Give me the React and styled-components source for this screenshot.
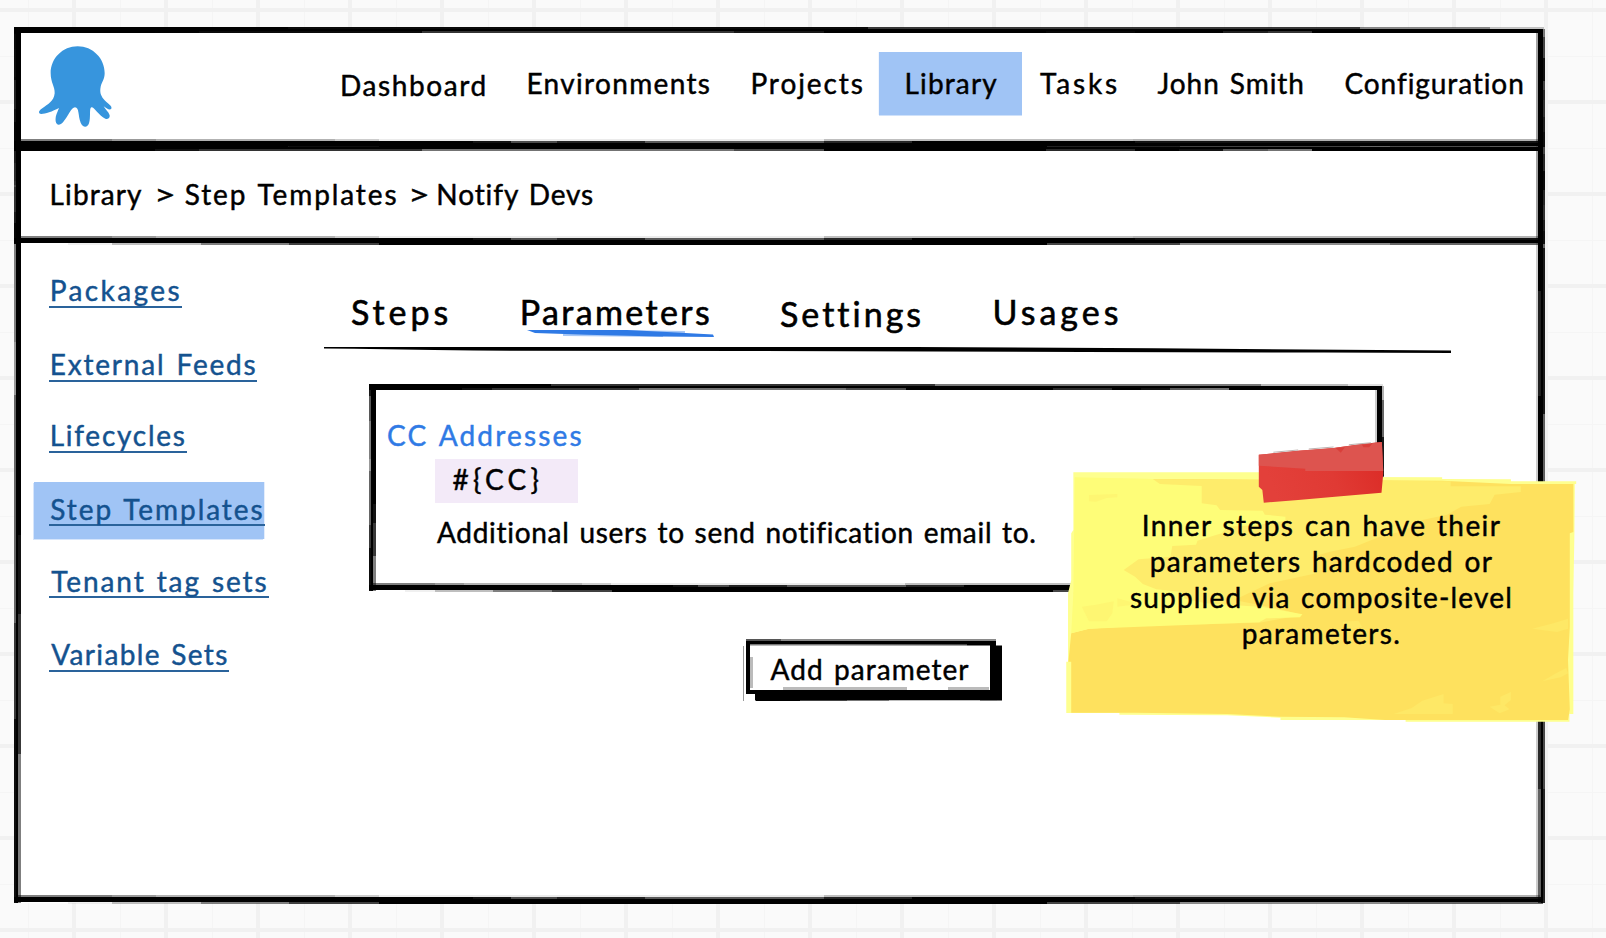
import React from 'react';
import styled, { createGlobalStyle, css } from 'styled-components';

const GlobalStyle = createGlobalStyle`
  html, body { margin: 0; padding: 0; }
  body {
    background-color: #fafafa;
    font-family: Lato, "Liberation Sans", sans-serif;
    color: #000;
    overflow: hidden;
  }
  *, *::before, *::after { box-sizing: border-box; }
`;

/* Builds a stepped gradient out of [opacity, endPercent] pairs. */
const steps = (dir, stops) => {
  let from = 0;
  const parts = stops.map(([alpha, to]) => {
    const part = `rgba(0,0,0,${alpha}) ${from}% ${to}%`;
    from = to;
    return part;
  });
  return `linear-gradient(${dir}, ${parts.join(', ')})`;
};

const TOP_OUTER = steps('to right', [[1, 17.9], [0.8, 55.8], [0.53, 88], [0.27, 96.5], [0.12, 100]]);
const TOP_INNER = steps('to right', [[1, 9.2], [0.93, 12.1], [0.8, 26.7], [0.55, 47.1], [0.7, 53], [1, 67.5], [0.84, 73.3], [1, 76.2], [0.93, 79.1], [0.65, 82], [0.55, 84.9], [1, 100]]);
const BOTTOM_LIGHT = steps('to right', [[0.5, 6.3], [0.4, 9.2], [0.3, 20.9], [0.2, 23.8], [0.08, 53], [0.25, 73.3], [0.3, 100]]);
const BOTTOM_INNER = steps('to right', [[1, 30], [0.93, 32.5], [0.7, 35.5], [0.86, 41.3], [0.65, 53], [0.85, 58.7], [1, 73.3], [0.93, 100]]);
const BOTTOM_OUTER = steps('to right', [[0, 3.4], [0.06, 6.3], [0.25, 12.1], [0.5, 17.9], [0.75, 23.8], [1, 67.5], [0.73, 76.2], [0.45, 90], [0.6, 100]]);
const LEFT_OUTER = steps('to bottom', [[0.9, 6], [0.66, 18], [0.5, 36], [0.4, 42], [0.6, 68], [0.78, 79], [0.95, 100]]);
const LEFT_INNER = steps('to bottom', [[1, 58], [0.93, 67], [0.78, 83], [0.5, 100]]);
const RIGHT_INNER = steps('to bottom', [[1, 30], [0.88, 42], [1, 73], [0.84, 87], [0.62, 100]]);
const RIGHT_OUTER = steps('to bottom', [[0.3, 7], [0.6, 25], [0.9, 44], [0.62, 60], [0.5, 75], [0.7, 87], [0.85, 100]]);
const BLACK = 'linear-gradient(#000, #000)';
const LIGHT = 'linear-gradient(rgba(0,0,0,.2), rgba(0,0,0,.2))';

const sketchEdges = css`
  background-repeat: no-repeat;
  background-image: ${TOP_OUTER}, ${BLACK}, ${TOP_INNER},
    ${BOTTOM_LIGHT}, ${BOTTOM_INNER}, ${BLACK}, ${BOTTOM_OUTER},
    ${LEFT_OUTER}, ${BLACK}, ${LEFT_INNER},
    ${LIGHT}, ${RIGHT_INNER}, ${BLACK}, ${RIGHT_OUTER}
    ${(p) => (p.$filled ? ', linear-gradient(#fff, #fff)' : '')};
  background-position:
    1px 1px, 1px 3px, 1px 5px,
    3px calc(100% - 7px), 1px calc(100% - 5px), 1px calc(100% - 2px), 3px 100%,
    1px 1px, 3px 1px, 5px 1px,
    calc(100% - 7px) 6px, calc(100% - 4px) 3px, calc(100% - 2px) 3px, 100% 3px,
    1px 2px;
  background-size:
    calc(100% - 2px) 2px, calc(100% - 3px) 2px, calc(100% - 3px) 2px,
    calc(100% - 8px) 2px, calc(100% - 3px) 2px, calc(100% - 3px) 3px, calc(100% - 5px) 2px,
    2px calc(100% - 2px), 2px calc(100% - 2px), 3px calc(100% - 2px),
    2px calc(100% - 12px), 3px calc(100% - 4px), 2px calc(100% - 4px), 2px calc(100% - 4px),
    calc(100% - 2px) calc(100% - 3px);
`;

const Page = styled.div`
  position: relative;
  width: 1606px;
  height: 938px;
  padding: 26px 0 0 13px;
  background-image:
    linear-gradient(90deg, #f1f1f1 4px, transparent 4px),
    linear-gradient(#f1f1f1 4px, transparent 4px),
    linear-gradient(90deg, #f5f5f5 1px, transparent 1px),
    linear-gradient(#f5f5f5 1px, transparent 1px);
  background-size: 92px 92px;
  background-position: 72px 0, 0 8px, 28px 0, 0 56px;
`;

const Window = styled.div`
  display: flex;
  flex-direction: column;
  width: 1532px;
  height: 878px;
  ${sketchEdges}
`;

const Header = styled.header`
  display: flex;
  align-items: flex-start;
  flex: none;
  height: 122px;
  padding: 10px 0 0 17px;
  ${sketchEdges}
`;

const Text = styled.span`
  display: block;
  font-size: ${(p) => p.$size || 28}px;
  line-height: ${(p) => (p.$size ? 44 : 36)}px;
  letter-spacing: ${(p) => p.$track}px;
  word-spacing: 2px;
  white-space: nowrap;
  font-variant-ligatures: none;
  -webkit-text-stroke: ${(p) => (p.$size ? 0.6 : 0.45)}px currentColor;
  stroke-linejoin: round;
`;

const Nav = styled.nav`
  display: grid;
  grid-template-columns: 186.4px 224px 128.6px 161px 117.5px 187px 180px;
  margin: 16px 0 0 220px;
`;

const NavItem = styled.a`
  height: 64px;
  padding-top: ${(p) => 13 + (p.$drop || 0)}px;
  ${(p) =>
    p.$active &&
    css`
      width: 143px;
      height: 63px;
      padding-left: 25.5px;
      background: #a0c4f5;
      box-shadow: 0 1px 0 #cfe1fa, -1px 0 0 #f1f6fe;
    `}
`;

const Breadcrumb = styled.div`
  display: grid;
  grid-template-columns: 104.2px 31px 223px 28.5px 1fr;
  flex: none;
  height: 101px;
  margin-top: -4px;
  padding: 32px 0 0 36.6px;
  ${sketchEdges}
`;

const Separator = styled(Text)`
  width: 20px;
  transform: scaleX(1.35);
  transform-origin: 0 50%;
`;

const Body = styled.div`
  display: flex;
  flex: 1;
`;

const Sidebar = styled.ul`
  flex: none;
  width: 290px;
  margin: 18.5px 0 0 21px;
  padding: 0;
  list-style: none;
`;

const SideItem = styled.li`
  width: 230px;
  height: 57px;
  margin-bottom: ${(p) => p.$gap}px;
  padding: 8px 0 0 15.3px;
  ${(p) =>
    p.$active &&
    css`
      background: #a0c4f5;
      box-shadow: -1px 1px 0 #d6e5fb, 1px 0 0 #e3edfc;
    `}
`;

const SideLink = styled.a`
  display: block;
  width: ${(p) => p.$width}px;
  height: 36px;
  padding: ${(p) => p.$drop || 0}px 0 0 ${(p) => p.$indent || 0}px;
  border-bottom: 2px solid #2a639b;
  color: #14528f;
`;

const Content = styled.main`
  display: flex;
  flex-direction: column;
  align-items: flex-start;
  padding-top: 44px;
`;

const Tabs = styled.div`
  display: grid;
  grid-template-columns: 168.7px 260.3px 212.5px 140px;
  height: 56px;
  padding-left: 27px;
`;

const Tab = styled.a`
  position: relative;
  padding-top: ${(p) => 1 + (p.$drop || 0)}px;
`;

const TabMarker = styled.svg`
  position: absolute;
  left: 7px;
  top: 41px;
`;

const TabRule = styled.svg`
  display: block;
`;

const Card = styled.section`
  width: 1016px;
  height: 209px;
  margin: 28px 0 0 44px;
  padding: 33.5px 0 0 19px;
  ${sketchEdges}
`;

const CardTitle = styled.div`
  color: #2f7ae5;
`;

const Variable = styled.div`
  width: 143px;
  height: 43.5px;
  margin: 6.5px 0 0 48px;
  padding: 2px 0 0 17.5px;
  background: #f3eaf8;
`;

const Description = styled.div`
  margin: 11px 0 0 50px;
`;

const Button = styled.button`
  position: relative;
  width: 250px;
  height: 55px;
  margin: 47px 0 0 422px;
  padding: 3.5px 0 0 20.5px;
  border: solid #000;
  border-width: 6px 6px 4px 4px;
  background: #fff;
  box-shadow: 6px 6.5px 0 #000;
  color: #000;
  font: inherit;
  text-align: left;

  &::before {
    content: '';
    position: absolute;
    inset: -7px -7px -11px -7px;
    background-repeat: no-repeat;
    background-image:
      linear-gradient(#fff, #fff),
      linear-gradient(90deg, #555 0 14%, #8a8a8a 14%),
      linear-gradient(90deg, #777 32%, #444 90%, #000 90%),
      linear-gradient(#bbb, #bbb),
      linear-gradient(90deg, #bbb 60%, transparent 60% 80%, #bbb 80%),
      linear-gradient(#999, #999),
      linear-gradient(90deg, #000 0 18%, #444 18% 37%, #777 37% 54%, #bbb 54% 91%, #777 91%);
    background-position: 9px 56px, 3px 1px, 7px 6px, 7px 19px, 40px 49px, 0 8px, 13px 100%;
    background-size: 3px 8px, 250px 2px, 241px 1.5px, 3px 31px, 206px 3px, 1px 56px, 246px 1.5px;
  }
`;

const Note = styled.aside`
  position: absolute;
  left: 1062px;
  top: 440px;
  width: 520px;
  height: 288px;
`;

const NotePaper = styled.svg`
  position: absolute;
  inset: 0;
`;

const NoteText = styled.div`
  position: relative;
  display: flex;
  flex-direction: column;
  align-items: center;
  padding: 67px 1px 0 0;
`;

const navItems = [
  { label: 'Dashboard', track: 1.6, drop: 2 },
  { label: 'Environments', track: 1.34 },
  { label: 'Projects', track: 1.92 },
  { label: 'Library', track: 1.15, active: true },
  { label: 'Tasks', track: 2.87 },
  { label: 'John Smith', track: 0.95 },
  { label: 'Configuration', track: 0.91 },
];

const sideItems = [
  { label: 'Packages', track: 2.42, width: 132.4, gap: 17, indent: 0.4 },
  { label: 'External Feeds', track: 1.82, width: 208.2, gap: 14, indent: 0.4 },
  { label: 'Lifecycles', track: 1.74, width: 137.7, gap: 16.5, indent: 0.4 },
  { label: 'Step Templates', track: 1.93, width: 215.7, gap: 15, indent: 1, drop: 1, active: true },
  { label: 'Tenant tag sets', track: 1.9, width: 219.7, gap: 16.5, indent: 2, drop: 1 },
  { label: 'Variable Sets', track: 1.35, width: 180.2, gap: 0, indent: 2 },
];

const tabs = [
  { label: 'Steps', track: 3.9 },
  { label: 'Parameters', track: 2.37, active: true },
  { label: 'Settings', track: 3, drop: 2 },
  { label: 'Usages', track: 4 },
];

const noteLines = [
  { label: 'Inner steps can have their', track: 1.41 },
  { label: 'parameters hardcoded or', track: 1.35 },
  { label: 'supplied via composite-level', track: 1.19 },
  { label: 'parameters.', track: 1.32 },
];

const Logo = () => (
  <svg width="90" height="100" viewBox="0 0 270 300" aria-label="Octopus">
    <path
      fill="#3795dd"
      d="M143 31C98 31 62 67 62 112C62 140 75 152 74 172C72 196 52 206 38 216C28 223 25 227 28 232C33 238 62 229 87 216C79 236 76 240 77 256C79 270 91 268 99 259C113 243 124 214 135 214C148 214 144 240 152 260C158 275 172 277 177 262C183 245 177 216 184 214C192 212 205 238 226 248C236 251 240 245 239 238C236 228 226 220 221 211C232 220 240 223 244 218C248 207 232 204 220 188C212 177 209 168 212 152C215 138 224 130 224 112C224 67 188 31 143 31Z"
    />
  </svg>
);

const Paper = () => (
  <NotePaper width="520" height="288" viewBox="34 240 1466.4 864" preserveAspectRatio="none">
    <defs>
      <linearGradient id="tape" x1="0" x2="1" y1="0.2" y2="0">
        <stop offset="0" stopColor="#e3403a" />
        <stop offset="0.5" stopColor="#e03a34" />
        <stop offset="1" stopColor="#db2a25" />
      </linearGradient>
    </defs>
    <path fill="#feff8f" d="M66 337L590 337L590 350L1106 352L1106 357L1300 358L1300 364L1484 364L1484 372L1480 372L1480 398L1479 520L1476 700L1476 1062L1465 1062L1465 1085L1003 1085L1003 1080L650 1080L650 1073L500 1066L196 1064L196 1059L46 1059L46 905L51 905L51 700L60 660L60 520L66 510Z" />
    <path fill="#fee15e" d="M70 356L300 357L1106 362L1300 372L1476 372L1476 516L1466 520L1466 800L1461 900L1466 1048L1461 1080L945 1080L830 1072L650 1070L500 1062L240 1058L60 1058L60 905L52 905L60 820L110 806L240 798Z" />
    <path fill="#feec6b" d="M285 357L1130 364L1130 379L1328 379L1328 396L1254 404L1240 432L1160 440L1120 464L1050 480L1000 512L930 530L860 560L790 575L740 590L752 640L620 670L560 700L520 720L640 745L712 765L590 788L240 798L66 700Z" />
    <path fill="#fefd78" d="M70 352L290 357L310 372L428 378L428 430L470 436L480 450L600 452L606 464L664 470L664 482L580 496L500 500L484 520L416 542L412 554L345 558L340 590L250 598L208 630L240 650L262 672L300 688L372 696L380 716L440 730L600 741L712 763L705 772L610 775L590 787L310 798L110 806L60 820L66 700Z" />
    <path fill="#fef672" d="M90 740L130 734L180 724L176 760L160 784L110 784ZM190 715L250 732L190 740ZM110 405L190 402L190 412L160 414L130 425L110 424Z" />
    <path fill="#fee866" d="M1388 964L1430 938L1456 924L1461 940L1440 952ZM1270 1010L1300 996L1300 1020L1282 1036L1296 1048L1268 1060L1240 1040L1270 1034ZM1020 1044L1050 1022L1110 1002L1110 1030L1136 1032L1136 1062L970 1062ZM1360 806L1420 790L1461 776L1461 806L1430 816ZM826 785L870 782L880 800L830 812Z" />
    <path fill="url(#tape)" d="M589 284L630 280L700 272L800 264L880 252L936 246L940 340L935 398L804 410L700 420L603 428L599 390L589 380Z" />
    <path fill="#dd544f" d="M589 284L630 280L700 272L800 264L880 252L936 246L940 333L720 333L720 326L589 317Z" />
    <path fill="#d93f3a" d="M806 264L832 262L820 278ZM880 254L910 250L900 262L884 262Z" />
    <path fill="none" stroke="#bdb3b2" strokeWidth="3" d="M630 277L700 270M730 267L800 261M843 254L905 248" />
  </NotePaper>
);

export default function App() {
  return (
    <>
      <GlobalStyle />
      <Page>
        <Window $filled>
          <Header>
            <Logo />
            <Nav>
              {navItems.map((item) => (
                <NavItem key={item.label} $active={item.active} $drop={item.drop}>
                  <Text $track={item.track}>{item.label}</Text>
                </NavItem>
              ))}
            </Nav>
          </Header>
          <Breadcrumb>
            <Text $track={1.1}>Library</Text>
            <Separator $track={0}>&gt;</Separator>
            <Text $track={1.89}>Step Templates</Text>
            <Separator $track={0}>&gt;</Separator>
            <Text $track={0.9}>Notify Devs</Text>
          </Breadcrumb>
          <Body>
            <Sidebar>
              {sideItems.map((item) => (
                <SideItem key={item.label} $active={item.active} $gap={item.gap}>
                  <SideLink $width={item.width} $indent={item.indent} $drop={item.drop}>
                    <Text $track={item.track}>{item.label}</Text>
                  </SideLink>
                </SideItem>
              ))}
            </Sidebar>
            <Content>
              <Tabs>
                {tabs.map((tab) => (
                  <Tab key={tab.label} $drop={tab.drop}>
                    <Text $size={34} $track={tab.track}>{tab.label}</Text>
                    {tab.active && (
                      <TabMarker width="188" height="8" viewBox="0 0 188 8">
                        <path fill="#a9c8f5" d="M90 0L158 1L158 3L90 3ZM36 4L136 4L136 7L36 6Z" />
                        <path fill="#2f7ae5" d="M0 0L100 0L140 2L186 4.4L187 7L132 6.4L60 4.8L8 3Z" />
                      </TabMarker>
                    )}
                  </Tab>
                ))}
              </Tabs>
              <TabRule width="1127" height="10" viewBox="0 0 1127 10">
                <path d="M0 2L590 2L830 3.2L1127 5.6L1127 8L1000 7.6L760 7L430 6L150 5.6L110 5L30 3.8L0 3.4Z" />
              </TabRule>
              <Card>
                <CardTitle>
                  <Text $track={2.16}>CC Addresses</Text>
                </CardTitle>
                <Variable>
                  <Text $track={4.2}>{'#{CC}'}</Text>
                </Variable>
                <Description>
                  <Text $track={0.7}>Additional users to send notification email to.</Text>
                </Description>
              </Card>
              <Button type="button">
                <Text $track={1.06}>Add parameter</Text>
              </Button>
            </Content>
          </Body>
        </Window>
        <Note>
          <Paper />
          <NoteText>
            {noteLines.map((line) => (
              <Text key={line.label} $track={line.track}>{line.label}</Text>
            ))}
          </NoteText>
        </Note>
      </Page>
    </>
  );
}
